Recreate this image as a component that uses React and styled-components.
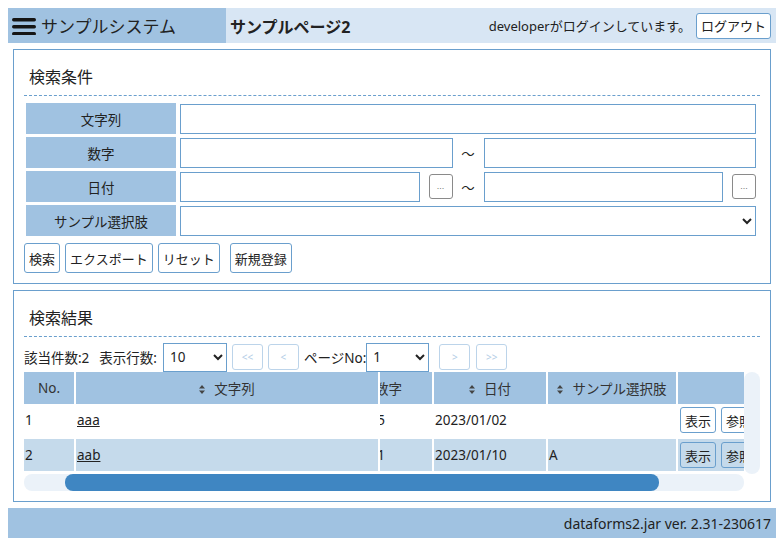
import React, { useLayoutEffect, useRef } from 'react';
import styled, { createGlobalStyle } from 'styled-components';

const GlobalStyle = createGlobalStyle`
  * { box-sizing: border-box; }
  body {
    margin: 8px;
    font-family: "Noto Sans", "Noto Sans CJK JP", sans-serif;
    font-size: 13.5px;
    color: #222;
    background: #fff;
  }
`;

const Header = styled.header`
  display: flex;
  align-items: center;
  height: 35px;
  background: #d8e6f4;
`;

const Brand = styled.div`
  display: flex;
  align-items: center;
  gap: 5px;
  width: 218px;
  height: 100%;
  padding-left: 4px;
  background: #a0c2e1;
  font-size: 17px;
`;

const PageTitle = styled.h1`
  flex: 1;
  margin: 0 0 0 4px;
  font-size: 16px;
  font-weight: bold;
`;

const UserInfo = styled.div`
  display: flex;
  align-items: center;
  gap: 5px;
  padding-right: 5px;
  font-size: 13px;
`;

const Button = styled.button`
  height: ${(p) => p.$h || 30}px;
  margin-left: ${(p) => p.$ml || 0}px;
  padding: 0 4px;
  border: 1px solid #6a9fcd;
  border-radius: 3px;
  background: ${(p) => p.$bg || '#fff'};
  color: #222;
  font-family: inherit;
  font-size: 13px;
  cursor: pointer;
`;

const PagerButton = styled.button`
  width: 31px;
  height: 26px;
  margin-left: ${(p) => p.$ml || 5}px;
  padding: 0;
  border: 1px solid #bcd4ea;
  border-radius: 3px;
  background: #fff;
  color: #b3cde6;
  font-family: inherit;
  font-size: 10px;
`;

const DotsButton = styled.button`
  width: 24px;
  height: 25px;
  margin-left: 9px;
  padding: 0;
  border: 1px solid #8a8a8a;
  border-radius: 3px;
  background: #fff;
  color: #777;
  font-size: 9px;
  line-height: 1;
`;

const Panel = styled.section`
  margin: 6px 5px 0;
  padding: 0 10px 10px;
  border: 1px solid #6a9fcd;
`;

const PanelTitle = styled.h2`
  height: 46px;
  margin: 0;
  padding: 15px 0 0 5px;
  border-bottom: 1px dashed #6a9fcd;
  font-size: 16px;
  font-weight: normal;
  line-height: 24px;
`;

const FormTable = styled.table`
  width: 100%;
  margin-top: 4px;
  border-spacing: 2px 3px;
`;

const FieldLabel = styled.th`
  width: 150px;
  height: 31px;
  padding: 0;
  background: #a0c2e1;
  font-weight: normal;
  text-align: center;
`;

const FieldCell = styled.td`
  padding: 0 2px;
`;

const TextInput = styled.input`
  display: block;
  width: 100%;
  min-width: 0;
  flex: 1;
  height: 30px;
  border: 1px solid #6a9fcd;
  font-family: inherit;
  font-size: 13.5px;
`;

const Select = styled.select`
  display: block;
  width: ${(p) => (p.$w ? `${p.$w}px` : '100%')};
  height: ${(p) => p.$h || 30}px;
  margin-left: ${(p) => p.$ml || 0}px;
  padding: 0 2px;
  border: 1px solid #6a9fcd;
  border-radius: 0;
  background: #fff;
  color: #222;
  font-family: inherit;
  font-size: 13.5px;
`;

const Range = styled.div`
  display: flex;
  align-items: center;
`;

const RangeSide = styled.div`
  display: flex;
  flex: 1;
  align-items: center;
`;

const Tilde = styled.span`
  width: 31px;
  text-align: center;
`;

const ButtonBar = styled.div`
  display: flex;
  gap: 5px;
  margin-top: 4px;
`;

const Pager = styled.div`
  display: flex;
  align-items: center;
  height: 35px;
  padding-top: 5px;
`;

const PagerText = styled.span`
  margin-left: ${(p) => p.$ml || 0}px;
  margin-right: ${(p) => p.$mr || 0}px;
  white-space: nowrap;
`;

/* scroll area: viewport + drawn scrollbars (the browser hides native ones) */
const ScrollArea = styled.div`
  display: grid;
  grid-template-columns: 720px 16px;
  grid-template-rows: 102px 17px;
  width: 736px;
`;

const Viewport = styled.div`
  overflow: hidden;
`;

const Track = styled.div`
  display: flex;
  border-radius: 8px;
  background: #ebf2f9;
`;

const Thumb = styled.div`
  height: 100%;
  border-radius: 8px;
  background: #3f86c2;
`;

const ResultTable = styled.table`
  width: 873px;
  table-layout: fixed;
  border-collapse: separate;
  border-spacing: 0;
`;

const stickyLeft = (p) =>
  p.$sticky !== undefined
    ? `position: sticky; left: ${p.$sticky}px; z-index: 1;`
    : '';

const HeadCell = styled.th`
  ${stickyLeft}
  width: ${(p) => p.$w}px;
  height: 32px;
  padding: 0 2px;
  border-right: 2px solid #fff;
  background: #a0c2e1;
  color: #333;
  font-weight: normal;
  text-align: center;
  white-space: nowrap;
`;

const BodyCell = styled.td`
  ${stickyLeft}
  height: 35px;
  padding: 0 1px;
  border-right: 2px solid #fff;
  border-bottom: 3px solid #fff;
  background: ${(p) => (p.$alt ? '#c5daeb' : '#fff')};
  text-align: ${(p) => p.$align || 'left'};
  white-space: nowrap;
  overflow: hidden;
`;

const RowLink = styled.a`
  color: #222;
`;

const RowButtons = styled.div`
  display: flex;
  gap: 5px;
  padding-left: 1px;
`;

const SortMark = styled.svg`
  margin-right: 9px;
  vertical-align: 0;
`;

const Footer = styled.footer`
  display: flex;
  align-items: center;
  justify-content: flex-end;
  height: 30px;
  margin-top: 6px;
  padding-right: 5px;
  background: #a0c2e1;
  font-size: 14px;
`;

const MenuIcon = () => (
  <svg width="24" height="18" viewBox="0 0 24 18">
    <rect x="0" y="1" width="24" height="3.4" rx="1.7" fill="#151515" />
    <rect x="0" y="8" width="24" height="3.4" rx="1.7" fill="#151515" />
    <rect x="0" y="15" width="24" height="3.4" rx="1.7" fill="#151515" />
  </svg>
);

const Sort = () => (
  <SortMark width="6" height="9" viewBox="0 0 6 9">
    <path d="M3 0 L6 3.6 H0 Z M3 9 L0 5.4 H6 Z" fill="#444" />
  </SortMark>
);

const rows = [
  { no: 1, text: 'aaa', num: 5, date: '2023/01/02', choice: '' },
  { no: 2, text: 'aab', num: 1, date: '2023/01/10', choice: 'A' },
];

const VIEW_W = 720;
const TABLE_W = 873;
const SCROLL_X = 50;

const App = () => {
  const viewRef = useRef(null);

  useLayoutEffect(() => {
    if (viewRef.current) viewRef.current.scrollLeft = SCROLL_X;
  }, []);

  const thumbW = (VIEW_W * VIEW_W) / TABLE_W;
  const thumbX = (SCROLL_X * VIEW_W) / TABLE_W;

  return (
    <>
      <GlobalStyle />
      <Header>
        <Brand>
          <MenuIcon />
          サンプルシステム
        </Brand>
        <PageTitle>サンプルページ2</PageTitle>
        <UserInfo>
          developerがログインしています。
          <Button $h={26}>ログアウト</Button>
        </UserInfo>
      </Header>

      <Panel>
        <PanelTitle>検索条件</PanelTitle>
        <FormTable>
          <tbody>
            <tr>
              <FieldLabel>文字列</FieldLabel>
              <FieldCell>
                <TextInput />
              </FieldCell>
            </tr>
            <tr>
              <FieldLabel>数字</FieldLabel>
              <FieldCell>
                <Range>
                  <RangeSide>
                    <TextInput />
                  </RangeSide>
                  <Tilde>～</Tilde>
                  <RangeSide>
                    <TextInput />
                  </RangeSide>
                </Range>
              </FieldCell>
            </tr>
            <tr>
              <FieldLabel>日付</FieldLabel>
              <FieldCell>
                <Range>
                  <RangeSide>
                    <TextInput />
                    <DotsButton>...</DotsButton>
                  </RangeSide>
                  <Tilde>～</Tilde>
                  <RangeSide>
                    <TextInput />
                    <DotsButton>...</DotsButton>
                  </RangeSide>
                </Range>
              </FieldCell>
            </tr>
            <tr>
              <FieldLabel>サンプル選択肢</FieldLabel>
              <FieldCell>
                <Select>
                  <option></option>
                </Select>
              </FieldCell>
            </tr>
          </tbody>
        </FormTable>
        <ButtonBar>
          <Button>検索</Button>
          <Button>エクスポート</Button>
          <Button>リセット</Button>
          <Button $ml={5}>新規登録</Button>
        </ButtonBar>
      </Panel>

      <Panel>
        <PanelTitle>検索結果</PanelTitle>
        <Pager>
          <PagerText $mr={10}>該当件数:2</PagerText>
          <PagerText>表示行数:</PagerText>
          <Select $w={64} $h={29} $ml={6}>
            <option>10</option>
          </Select>
          <PagerButton disabled>&lt;&lt;</PagerButton>
          <PagerButton disabled>&lt;</PagerButton>
          <PagerText $ml={5}>ページNo:</PagerText>
          <Select $w={63} $h={29}>
            <option>1</option>
          </Select>
          <PagerButton disabled $ml={10}>&gt;</PagerButton>
          <PagerButton disabled $ml={6}>&gt;&gt;</PagerButton>
        </Pager>
        <ScrollArea>
          <Viewport ref={viewRef}>
            <ResultTable>
              <thead>
                <tr>
                  <HeadCell $w={52} $sticky={0}>No.</HeadCell>
                  <HeadCell $w={304} $sticky={52}>
                    <Sort />
                    文字列
                  </HeadCell>
                  <HeadCell $w={104}>
                    <Sort />
                    数字
                  </HeadCell>
                  <HeadCell $w={114}>
                    <Sort />
                    日付
                  </HeadCell>
                  <HeadCell $w={130}>
                    <Sort />
                    サンプル選択肢
                  </HeadCell>
                  <HeadCell $w={169}></HeadCell>
                </tr>
              </thead>
              <tbody>
                {rows.map((r, i) => {
                  const alt = i % 2 === 1;
                  return (
                    <tr key={r.no}>
                      <BodyCell $alt={alt} $sticky={0}>{r.no}</BodyCell>
                      <BodyCell $alt={alt} $sticky={52}>
                        <RowLink href="#">{r.text}</RowLink>
                      </BodyCell>
                      <BodyCell $alt={alt} $align="center">{r.num}</BodyCell>
                      <BodyCell $alt={alt}>{r.date}</BodyCell>
                      <BodyCell $alt={alt}>{r.choice}</BodyCell>
                      <BodyCell $alt={alt}>
                        <RowButtons>
                          <Button $h={26} $bg="transparent">表示</Button>
                          <Button $h={26} $bg="transparent">参照</Button>
                        </RowButtons>
                      </BodyCell>
                    </tr>
                  );
                })}
              </tbody>
            </ResultTable>
          </Viewport>
          <Track />
          <Track>
            <Thumb style={{ marginLeft: thumbX, width: thumbW }} />
          </Track>
        </ScrollArea>
      </Panel>

      <Footer>dataforms2.jar ver. 2.31-230617</Footer>
    </>
  );
};

export default App;
